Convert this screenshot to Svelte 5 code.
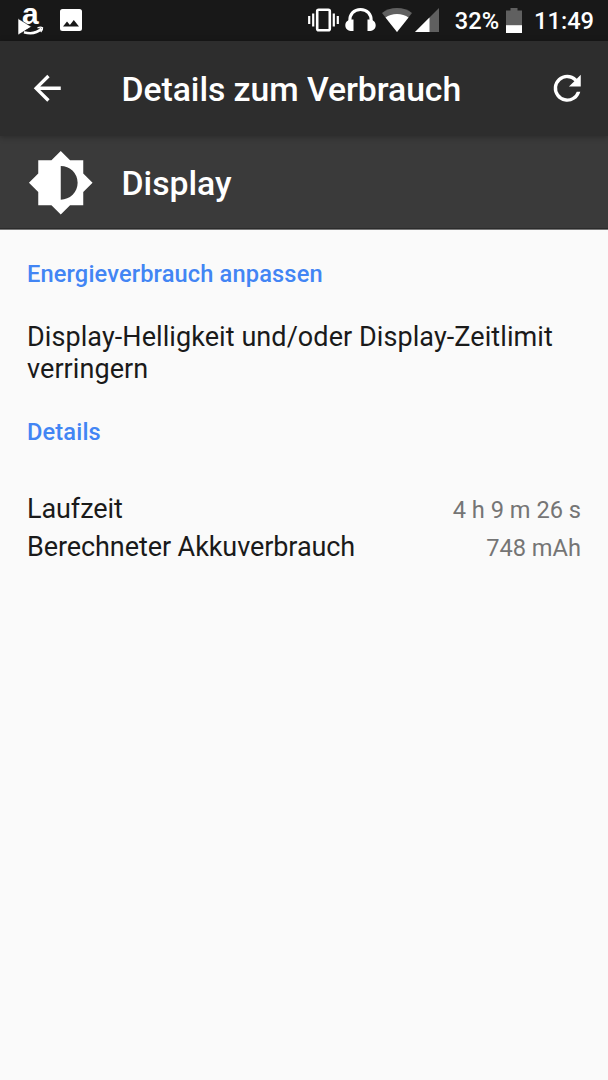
<script>
  const battery = '32%';
  const clock = '11:49';

  const details = [
    { label: 'Laufzeit', value: '4 h 9 m 26 s' },
    { label: 'Berechneter Akkuverbrauch', value: '748 mAh' },
  ];
</script>

<div class="screen">
  <div class="status">
    <div class="notifications">
      <svg class="shop" width="26" height="41" viewBox="0 0 26 41">
        <text class="amazon" x="4" y="23.500">a</text>
        <path d="M0 18.500 13.500 26.800 0 35z" fill="#fff" stroke="#181818" stroke-width=".6" />
        <path d="M6 32.200c6 1.800 13 .8 17.500-3.700" fill="none" stroke="#fff" stroke-width="2.600" />
        <path d="M19.500 27.800c2-.8 4-.8 5-.1.200 1.300-.6 3-1.800 4.200" fill="none" stroke="#fff" stroke-width="1.400" />
        <path d="M13.200 27.300 7 31" fill="none" stroke="#181818" stroke-width=".7" />
      </svg>
      <svg class="picture" width="22" height="22" viewBox="0 0 22 22">
        <path d="M2.500 0h17A2.500 2.500 0 0 1 22 2.500v17a2.500 2.500 0 0 1-2.500 2.500h-17A2.500 2.500 0 0 1 0 19.500v-17A2.500 2.500 0 0 1 2.500 0zM3 17.500h16l-5.200-6.600-3.900 5-2.900-3.300z" fill="#fff" fill-rule="evenodd" />
      </svg>
    </div>

    <div class="system">
      <svg width="31" height="24" viewBox="0 0 31 24">
        <rect x="9.200" y="1.700" width="12.600" height="20.600" rx="1.500" fill="none" stroke="#fff" stroke-width="2.600" />
        <path d="M1.200 8v8M5.200 5.500v13M25.800 5.500v13M29.800 8v8" stroke="#fff" stroke-width="2.200" />
      </svg>
      <svg class="headphones" width="31" height="24" viewBox="0 0 31 24">
        <path d="M4.800 13C4.500 6 9 1.500 15.500 1.500S26.500 6 26.200 13" fill="none" stroke="#fff" stroke-width="3" />
        <path d="M8.500 11.500v11.500C3.500 23.500.3 21 .3 17.200S3.500 11.300 8.500 11.500zM22.500 11.500v11.500c5 .5 8.200-2 8.200-5.800s-3.200-5.900-8.200-5.700z" fill="#fff" />
      </svg>
      <svg class="wifi" width="30" height="24" viewBox="0 0 30 24">
        <path d="M15 24 0 5C4 1.800 9.200 0 15 0s11 1.800 15 5z" fill="#606060" />
        <path d="M15 24 3.500 9.500C6.500 7.200 10.500 6 15 6s8.500 1.200 11.500 3.500z" fill="#fff" />
      </svg>
      <svg class="signal" width="24" height="24" viewBox="0 0 24 24">
        <path d="M0 24 24 0v24z" fill="#606060" />
        <path d="M0 24 14.500 9.500V24z" fill="#fff" />
      </svg>
      <span class="level">{battery}</span>
      <svg class="battery" width="16" height="25" viewBox="0 0 16 25">
        <path d="M4.500 0h7v2.500H16V18H0V2.500h4.500z" fill="#606060" />
        <path d="M0 17.200h16V25H0z" fill="#fff" />
      </svg>
      <span class="clock">{clock}</span>
    </div>
  </div>

  <header class="toolbar">
    <svg width="40.500" height="40.500" viewBox="0 0 24 24">
      <path d="M20 11H7.830l5.590-5.590L12 4l-8 8 8 8 1.410-1.410L7.830 13H20v-2z" fill="#fff" />
    </svg>
    <h1>Details zum Verbrauch</h1>
    <svg width="40.500" height="40.500" viewBox="0 0 24 24">
      <path d="M17.650 6.350A7.958 7.958 0 0 0 12 4a8 8 0 1 0 7.730 10h-2.080A6 6 0 1 1 12 6c1.660 0 3.140.69 4.220 1.780L13 11h7V4z" fill="#fff" />
    </svg>
  </header>

  <div class="entry">
    <svg width="67.500" height="67.500" viewBox="0 0 24 24">
      <path d="M20 15.310 23.310 12 20 8.690V4h-4.690L12 .69 8.690 4H4v4.690L.69 12 4 15.310V20h4.690L12 23.310 15.310 20H20zM12 18V6a6 6 0 0 1 0 12z" fill="#fff" />
    </svg>
    <h2>Display</h2>
  </div>

  <main>
    <h3>Energieverbrauch anpassen</h3>
    <p>Display-Helligkeit und/oder Display-Zeitlimit verringern</p>
    <h3>Details</h3>
    <dl>
      {#each details as row}
        <div class="row">
          <dt>{row.label}</dt>
          <dd>{row.value}</dd>
        </div>
      {/each}
    </dl>
  </main>
</div>

<style>
:global(body) {
  margin: 0;
  background: #fafafa;
}

.screen {
  width: 608px;
  height: 1080px;
  overflow: hidden;
  background: #fafafa;
  color: #1a1a1a;
  font-family: Roboto, sans-serif;
}

svg {
  display: block;
  flex: none;
}

h1,
h2,
h3,
p,
dl,
dd {
  margin: 0;
  font-weight: 400;
}

.status {
  display: flex;
  justify-content: space-between;
  height: 41px;
  box-sizing: border-box;
  padding: 0 14px 0 18px;
  background: #181818;
  color: #fff;
}

.notifications {
  display: flex;
}

.shop {
  overflow: visible;
}

.amazon {
  font: 700 30px 'Liberation Sans', sans-serif;
  fill: #fff;
}

.picture {
  margin: 9px 0 0 16px;
}

.system {
  display: flex;
  align-items: flex-start;
  padding-top: 8px;
}

.headphones {
  margin-left: 6px;
}

.wifi {
  margin-left: 6px;
}

.signal {
  margin-left: 3px;
}

.level,
.clock {
  font-size: 23.640px;
  font-weight: 500;
  line-height: 26px;
}

.level {
  margin-left: 16px;
}

.battery {
  margin-left: 7px;
}

.clock {
  margin-left: 12px;
}

.toolbar {
  position: relative;
  display: flex;
  align-items: center;
  height: 95px;
  box-sizing: border-box;
  padding: 0 21px 1px 27px;
  background: #2d2d2d;
  box-shadow: 0 1px 6px rgba(0, 0, 0, .3);
}

h1,
h2 {
  padding-top: 3px;
  color: #fff;
  font-size: 33.780px;
  font-weight: 500;
  line-height: 40px;
}

h1 {
  flex: 1;
  margin-left: 54px;
  letter-spacing: -.06px;
}

.entry {
  display: flex;
  align-items: center;
  height: 94px;
  box-sizing: border-box;
  padding: 0 27px;
  background: #3a3a3a;
  border-bottom: 1px solid #777;
  box-shadow: inset 0 -1px #2b2b2b;
}

h2 {
  margin-left: 27px;
}

main {
  padding: 30px 27px 0;
}

h3 {
  color: #4285f4;
  font-size: 23.640px;
  font-weight: 500;
  line-height: 28px;
  letter-spacing: .14px;
}

p {
  margin: 33px 0;
  font-size: 27.020px;
  line-height: 32px;
  letter-spacing: .07px;
}

dl {
  margin-top: 44px;
}

.row {
  display: flex;
  justify-content: space-between;
  align-items: baseline;
  height: 38px;
  line-height: 38px;
}

dt {
  font-size: 27.020px;
  letter-spacing: -.09px;
}

dd {
  color: #757575;
  font-size: 23.640px;
}
</style>
